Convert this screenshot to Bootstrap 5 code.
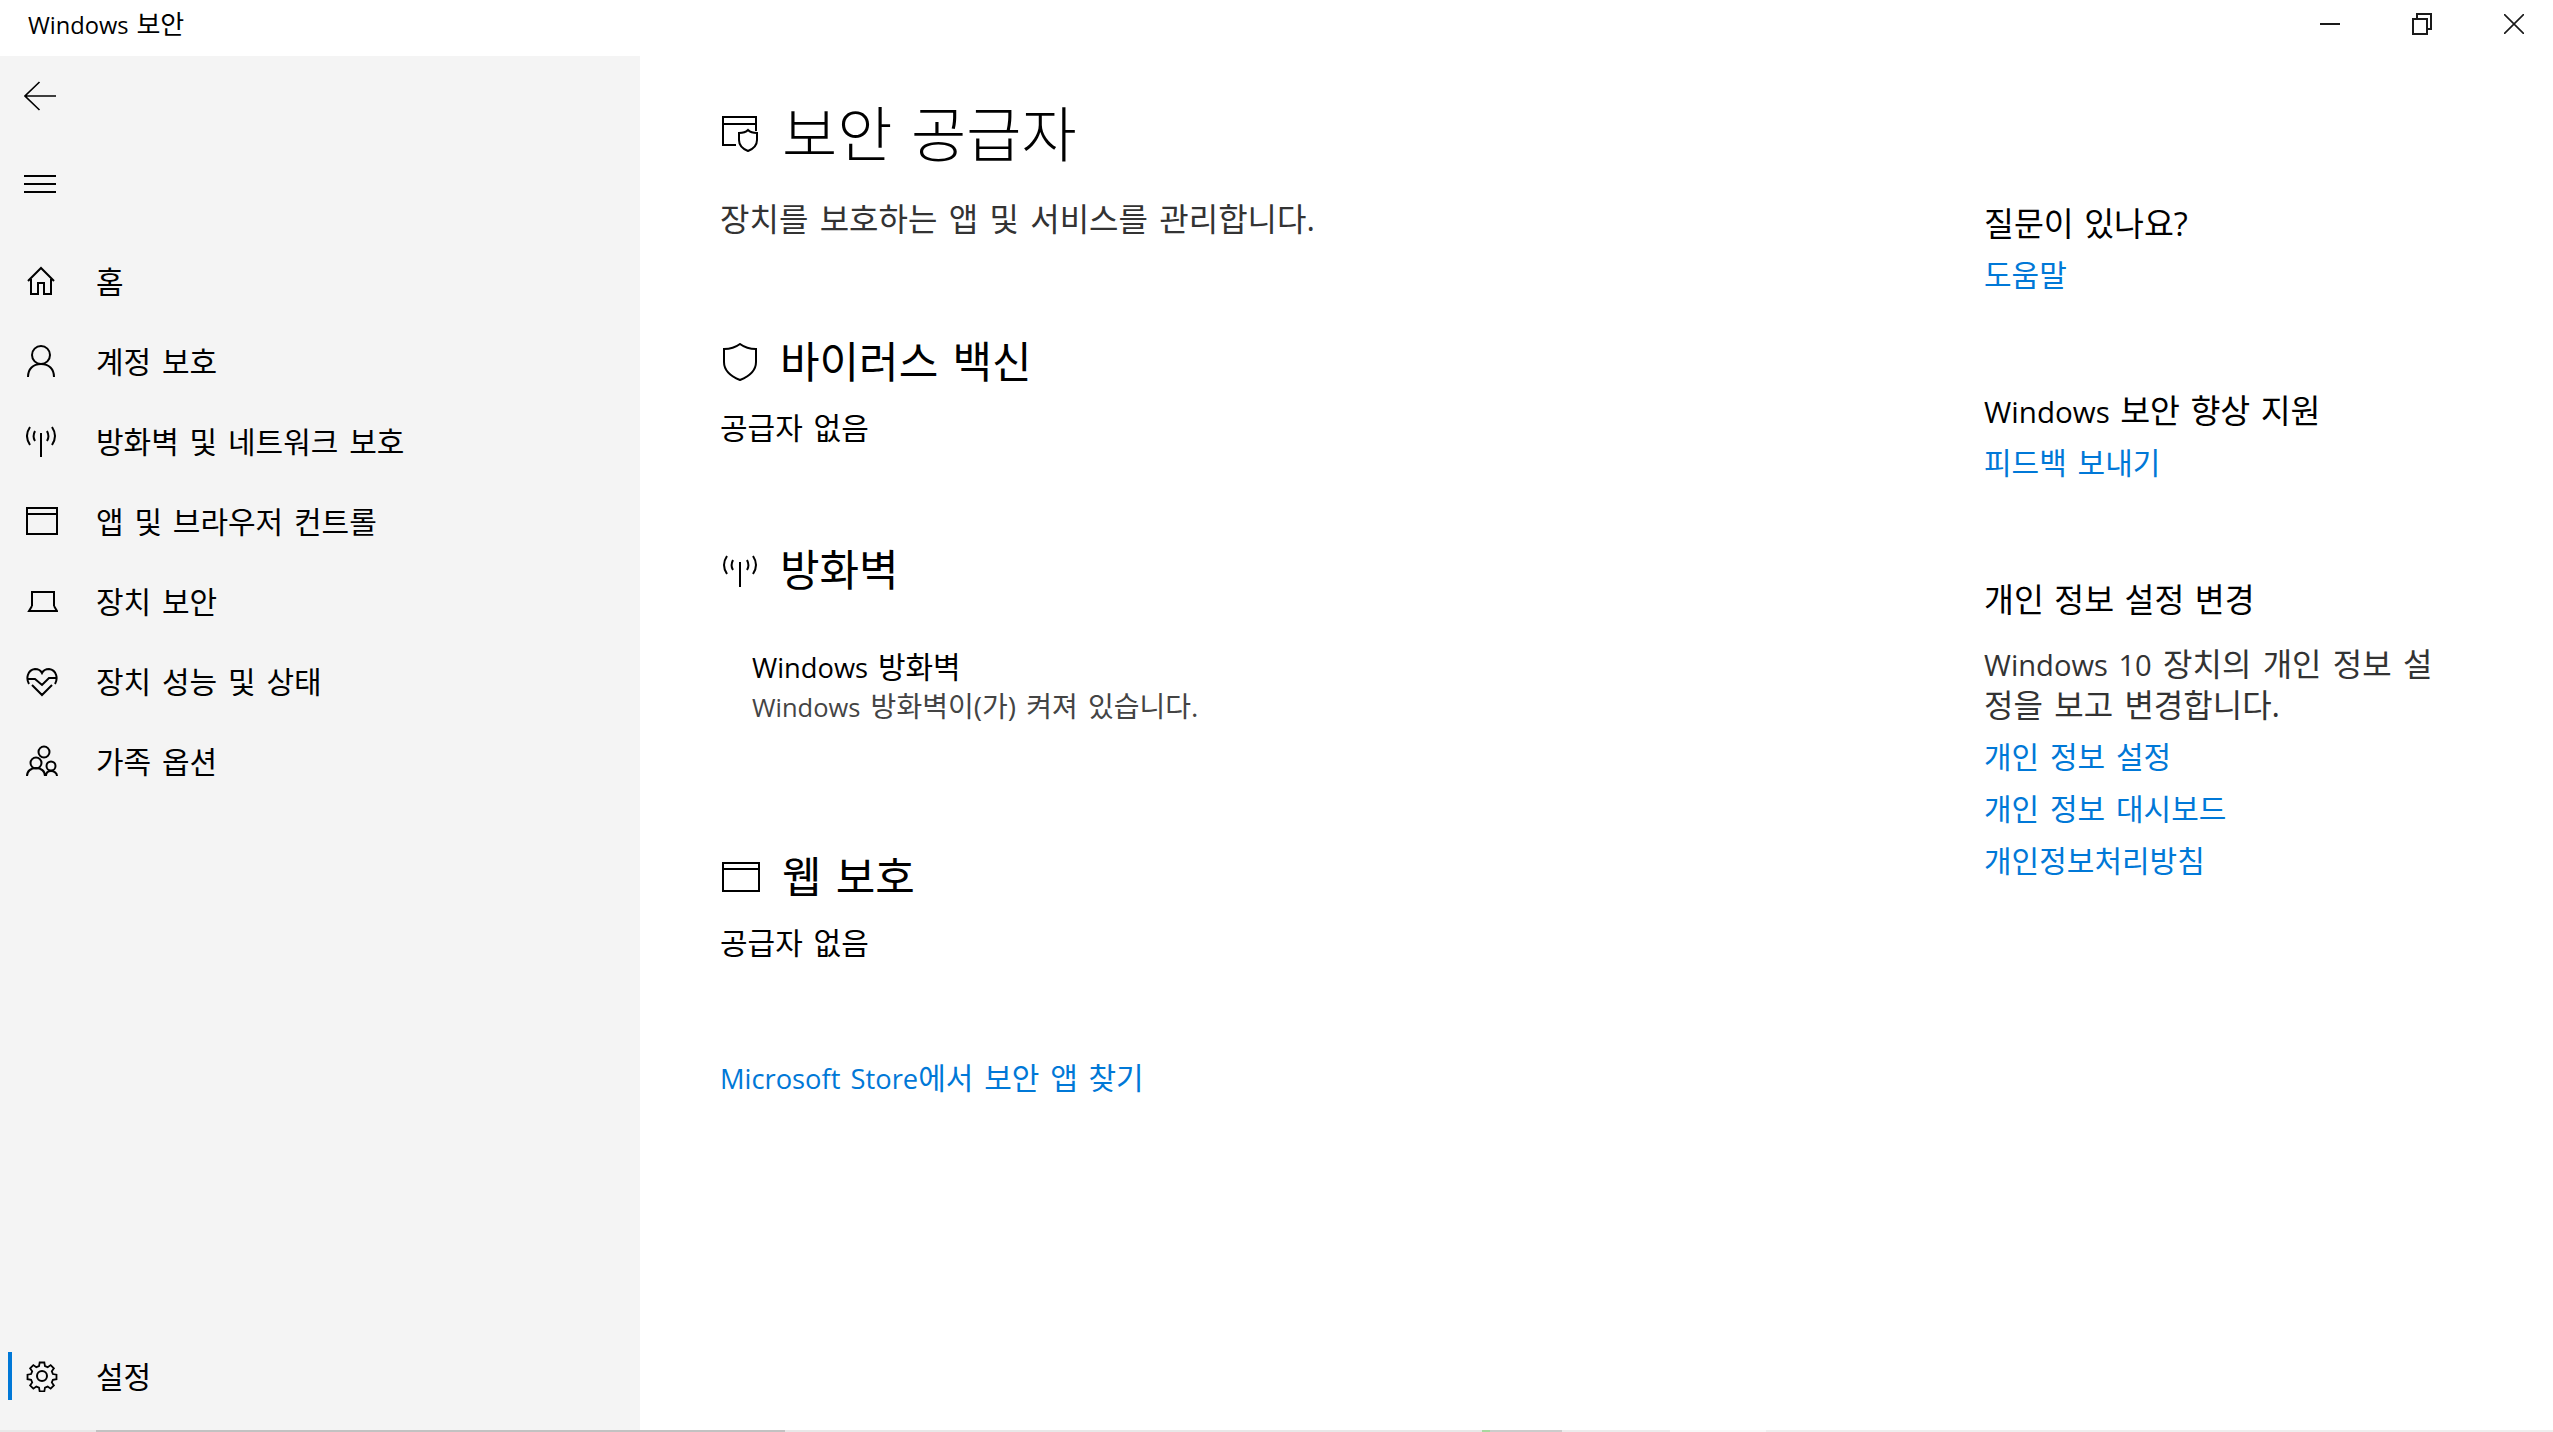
<!DOCTYPE html>
<html lang="ko">
<head>
<meta charset="UTF-8">
<title>Windows 보안</title>
<link rel="stylesheet" href="https://cdn.jsdelivr.net/npm/bootstrap@5.3.0/dist/css/bootstrap.min.css">
<style>
html, body { height: 100%; overflow: hidden; }
body { font-family: "Open Sans", "Noto Sans CJK KR", sans-serif; color: #000; background: #fff; font-weight: 400; }
a { color: #0078d7; text-decoration: none; }
svg { display: block; fill: none; stroke: #000; stroke-width: 2; flex: none; }
.lat { font-size: .91em; }

.title-bar { height: 56px; padding: 0 29px 8px 28px; font-size: 26px; word-spacing: 1px; }
.win-btns { gap: 72px; }
.win-btns svg { stroke: #1a1a1a; }

.app-body { height: calc(100vh - 56px); }
.side-pane { width: 640px; background: #f4f4f4; padding-top: 4px; }
.side-top { height: 72px; padding-left: 24px; }
.side-top + .side-top { margin-top: 16px; }
.arrow-ico { stroke-width: 1.6; }
.side-gap { height: 21px; }
.side-row { height: 80px; padding-left: 26px; font-size: 30px; word-spacing: 3px; color: #000; }
.side-row svg { margin-right: 38px; }
.side-row.is-active { position: relative; margin-bottom: 16px; }
.side-row.is-active::before { content: ""; position: absolute; left: 8px; top: 16px; width: 4px; height: 48px; background: #0078d7; }

.main-pane { padding-left: 80px; width: 1344px; }
.page-head { height: 92px; margin-top: 32px; }
.page-head svg, .sect-head svg { margin-left: 2px; }
.page-head h1 { font-size: 60px; font-weight: 300; margin: 0 0 0 22px; word-spacing: 3px; }
.page-sub { font-size: 32px; color: #333; margin: 19px 0 0; line-height: 40px; word-spacing: 3px; }
.sect-head { height: 56px; margin-top: 94px; }
.sect-head h2 { font-size: 43px; font-weight: 400; margin: 0 0 0 22px; word-spacing: 3px; }
.sect-first { margin-top: 95px; }
.sect-web { margin-top: 123px; }
.sect-text { font-size: 30px; margin: 18px 0 0; line-height: 40px; word-spacing: 3px; }
.fw-item { padding-left: 32px; margin-top: 50px; }
.fw-name { font-size: 30px; line-height: 38px; word-spacing: 2px; }
.fw-state { font-size: 28px; color: #444; line-height: 38px; word-spacing: 3px; }
.store-link { font-size: 30px; line-height: 40px; margin-top: 95px; word-spacing: 3px; }

.info-pane { padding-top: 148px; width: 470px; }
.info-head { font-size: 32.500px; line-height: 40px; margin: 0; font-weight: 400; word-spacing: 2px; }
.info-head.next-a { margin-top: 96px; }
.info-head.next-b { margin-top: 97px; }
.info-link { font-size: 30px; line-height: 40px; margin-top: 11px; word-spacing: 3px; }
.info-list { margin-top: 12px; }
.info-list .info-link { margin-top: 12px; }
.info-list .info-link:first-child { margin-top: 0; }
.info-text { font-size: 32px; line-height: 40px; color: #333; margin: 24px 0 0; word-spacing: 3px; }

.h-scroll { position: absolute; left: 0; right: 0; bottom: 0; height: 2px; background: #eee; }
.seg { height: 2px; flex: none; }
.seg-a { width: 96px; background: #e8e8e8; }
.seg-b { width: 689px; background: #c2c2c2; }
.seg-c { width: 697px; background: #e8e8e8; }
.seg-d { width: 8px; background: #a8d8a0; }
.seg-e { width: 72px; background: #ccc; }
.seg-f { width: 108px; background: #ececec; }
.seg-g { width: 96px; background: #f8f8f8; }
</style>
</head>
<body class="position-relative">

<div class="title-bar d-flex align-items-center justify-content-between">
  <span><span class="lat">Windows</span> 보안</span>
  <div class="win-btns d-flex align-items-center">
    <svg width="20" height="20" viewBox="0 0 20 20"><path d="M0 10h20"/></svg>
    <svg width="20" height="22" viewBox="0 0 20 22"><path d="M1 6h14v15H1zM5 6V1h14v15h-4"/></svg>
    <svg width="20" height="20" viewBox="0 0 20 20"><path d="M0 0l20 20M20 0L0 20" stroke-width="1.6"/></svg>
  </div>
</div>

<div class="app-body d-flex">
  <nav class="side-pane d-flex flex-column">
    <div class="side-top d-flex align-items-center">
      <svg class="arrow-ico" width="32" height="30" viewBox="0 0 32 30"><path d="M32 15H1M15.500 1L1 15l14.500 14"/></svg>
    </div>
    <div class="side-top d-flex align-items-center">
      <svg width="32" height="20" viewBox="0 0 32 20"><path d="M0 2h32M0 10h32M0 18h32"/></svg>
    </div>
    <div class="side-gap"></div>

    <a class="side-row d-flex align-items-center" href="#">
      <svg width="32" height="32" viewBox="0 0 32 32"><path d="M2 16L15 3l13 13M5 14v15h7V18h6v11h7V14"/></svg>
      <span>홈</span>
    </a>
    <a class="side-row d-flex align-items-center" href="#">
      <svg width="32" height="32" viewBox="0 0 32 32"><circle cx="15" cy="10" r="9"/><path d="M2 32c0-8 5-13 13-13s13 5 13 13"/></svg>
      <span>계정 보호</span>
    </a>
    <a class="side-row d-flex align-items-center" href="#">
      <svg width="32" height="32" viewBox="0 0 32 32"><path d="M15 8v24M4 2C0 8 0 14 4 20M9 6c-2 4-2 7 0 10M26 2c4 6 4 12 0 18M21 6c2 4 2 7 0 10"/></svg>
      <span>방화벽 및 네트워크 보호</span>
    </a>
    <a class="side-row d-flex align-items-center" href="#">
      <svg width="32" height="32" viewBox="0 0 32 32"><path d="M1 3h30v26H1zM1 9h30"/></svg>
      <span>앱 및 브라우저 컨트롤</span>
    </a>
    <a class="side-row d-flex align-items-center" href="#">
      <svg width="32" height="32" viewBox="0 0 32 32"><path d="M6 21V7h22v14M6 21L3 26h28l-3-5"/></svg>
      <span>장치 보안</span>
    </a>
    <a class="side-row d-flex align-items-center" href="#">
      <svg width="32" height="32" viewBox="0 0 32 32"><path d="M3 19C0 14 1 5 9 4c4 0 6 2 7 4 1-2 3-4 7-4 8 1 9 10 6 15M2 14h7l7 6 7-7h8M6 20l10 10 10-10"/></svg>
      <span>장치 성능 및 상태</span>
    </a>
    <a class="side-row d-flex align-items-center" href="#">
      <svg width="32" height="32" viewBox="0 0 32 32"><circle cx="18" cy="7" r="5.500"/><circle cx="10" cy="18" r="5.500"/><circle cx="25" cy="21" r="4.500"/><path d="M1 31c0-5 4-8 9-8s9 3 9 8M20 31c0-3 2-5 5-5s6 2 6 5"/></svg>
      <span>가족 옵션</span>
    </a>

    <a class="side-row is-active d-flex align-items-center mt-auto" href="#">
      <svg width="32" height="32" viewBox="0 0 32 32"><circle cx="16" cy="16" r="5"/><path d="M13.400 1h5.200l.7 4 3 1.200 3.300-2.300 3.600 3.600-2.300 3.300 1.200 3 4 .7v5l-4 .7-1.200 3 2.300 3.300-3.600 3.600-3.300-2.300-3 1.200-.7 4h-5.200l-.7-4-3-1.200-3.300 2.300-3.600-3.600 2.300-3.300-1.200-3-4-.7v-5l4-.7 1.200-3-2.300-3.300 3.600-3.600 3.300 2.300 3-1.200z" transform="translate(1.600 1.600) scale(.9)"/></svg>
      <span>설정</span>
    </a>
  </nav>

  <main class="main-pane">
    <div class="page-head d-flex align-items-center">
      <svg width="38" height="36" viewBox="0 0 38 36"><path d="M14 29H1V1h33v14M1 8h33"/><path d="M26 14c2 2 6 3 9 3v7c0 5-4 9-9 11-5-2-9-6-9-11v-7c3 0 7-1 9-3z" fill="#fff"/></svg>
      <h1>보안 공급자</h1>
    </div>
    <p class="page-sub">장치를 보호하는 앱 및 서비스를 관리합니다.</p>

    <div class="sect-head sect-first d-flex align-items-center">
      <svg width="36" height="38" viewBox="0 0 36 38"><path d="M18 1c4 3 10 5 16 5v13c0 8-6 14-16 18C8 33 2 27 2 19V6c6 0 12-2 16-5z"/></svg>
      <h2>바이러스 백신</h2>
    </div>
    <p class="sect-text">공급자 없음</p>

    <div class="sect-head d-flex align-items-center">
      <svg width="36" height="34" viewBox="0 0 36 34"><path d="M18 9v25M5 3C1 9 1 15 5 21M11 7c-2 4-2 7 0 10M31 3c4 6 4 12 0 18M25 7c2 4 2 7 0 10"/></svg>
      <h2>방화벽</h2>
    </div>
    <div class="fw-item">
      <div class="fw-name"><span class="lat">Windows</span> 방화벽</div>
      <div class="fw-state"><span class="lat">Windows</span> 방화벽이(가) 켜져 있습니다.</div>
    </div>

    <div class="sect-head sect-web d-flex align-items-center">
      <svg width="38" height="30" viewBox="0 0 38 30"><path d="M1 1h36v28H1zM1 7h36"/></svg>
      <h2>웹 보호</h2>
    </div>
    <p class="sect-text">공급자 없음</p>

    <a class="store-link d-inline-block" href="#"><span class="lat">Microsoft Store</span>에서 보안 앱 찾기</a>
  </main>

  <aside class="info-pane">
    <h3 class="info-head">질문이 있나요?</h3>
    <a class="info-link d-block" href="#">도움말</a>

    <h3 class="info-head next-a"><span class="lat">Windows</span> 보안 향상 지원</h3>
    <a class="info-link d-block" href="#">피드백 보내기</a>

    <h3 class="info-head next-b">개인 정보 설정 변경</h3>
    <p class="info-text"><span class="lat">Windows 10</span> 장치의 개인 정보 설<br>정을 보고 변경합니다.</p>
    <div class="info-list">
      <a class="info-link d-block" href="#">개인 정보 설정</a>
      <a class="info-link d-block" href="#">개인 정보 대시보드</a>
      <a class="info-link d-block" href="#">개인정보처리방침</a>
    </div>
  </aside>
</div>

<div class="h-scroll d-flex">
  <div class="seg seg-a"></div><div class="seg seg-b"></div><div class="seg seg-c"></div><div class="seg seg-d"></div>
  <div class="seg seg-e"></div><div class="seg seg-f"></div><div class="seg seg-g"></div>
</div>

<script src="https://cdn.jsdelivr.net/npm/bootstrap@5.3.0/dist/js/bootstrap.bundle.min.js"></script>
</body>
</html>
